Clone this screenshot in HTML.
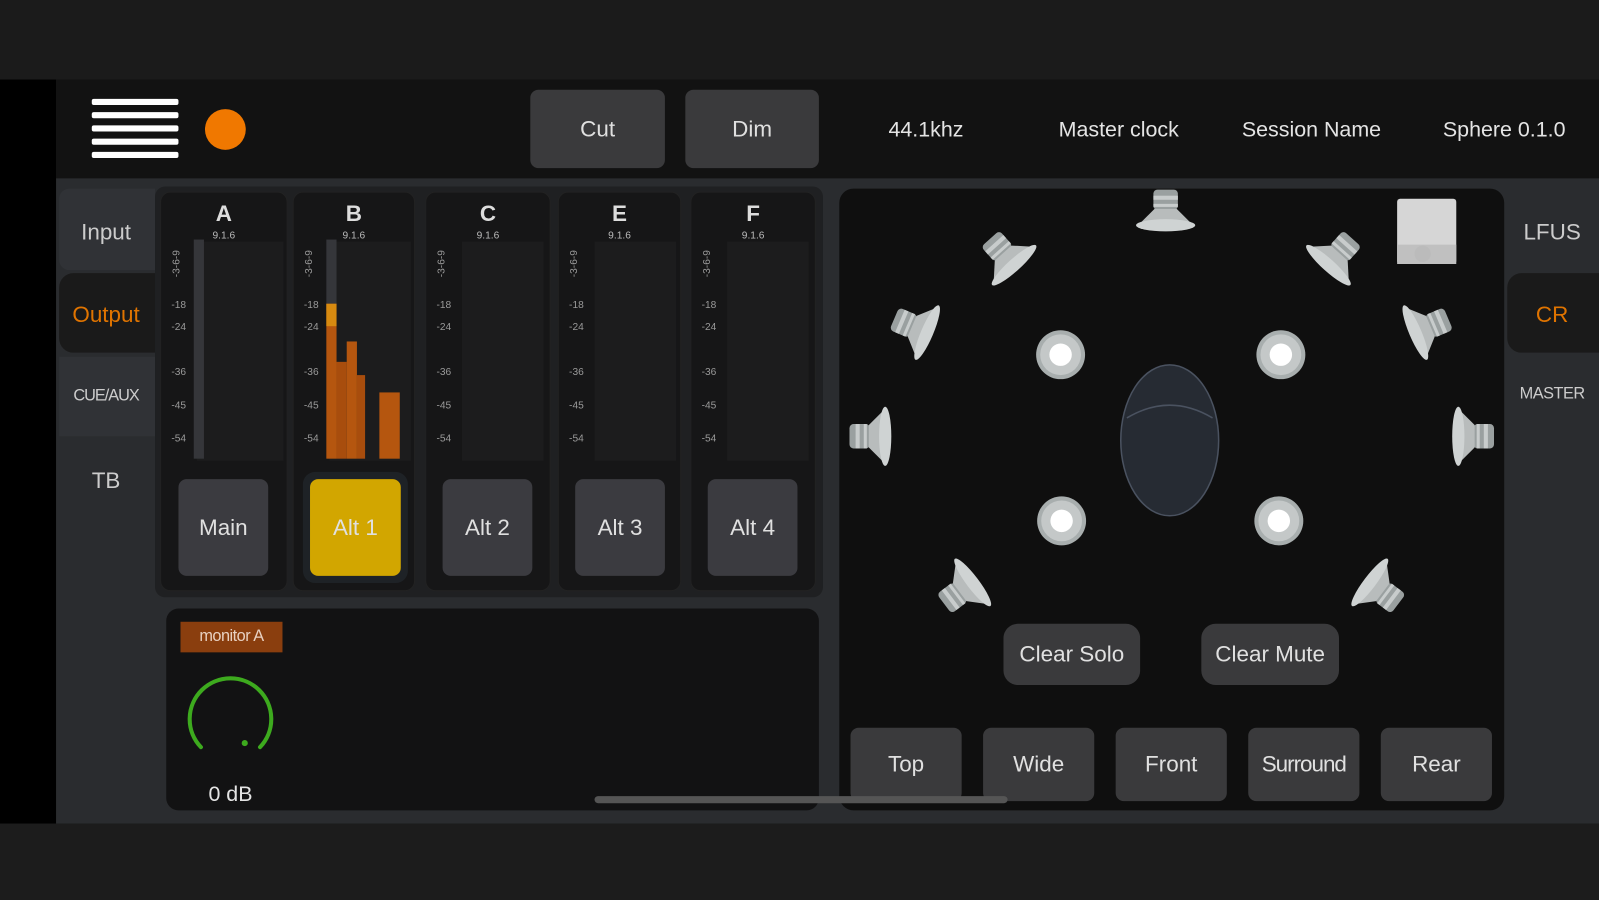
<!DOCTYPE html>
<html><head><meta charset="utf-8"><style>
*{margin:0;padding:0;box-sizing:border-box}
body{width:1599px;height:900px;background:#1b1b1b;position:relative;overflow:hidden;font-family:"Liberation Sans",sans-serif;color:#ddd}
#w{position:absolute;left:0;top:0;width:1568px;height:883px;transform:scale(1.0198,1.0193);transform-origin:0 0}
.a{position:absolute}
.btn{position:absolute;background:#3a3a3c;border-radius:8px;display:flex;align-items:center;justify-content:center;font-size:22px;color:#e0e0e0}
.t{position:absolute;font-size:21px;color:#e4e4e4;transform:translateX(-50%);white-space:nowrap}
.strip{position:absolute;top:188px;height:392px;background:#161617;border-radius:10px;border:1px solid #222}
.sl{position:absolute;width:100%;text-align:center;font-size:22px;font-weight:bold;top:8px;color:#ddd}
.sf{position:absolute;width:100%;text-align:center;font-size:10px;top:37px;color:#bbb}
.mt{position:absolute;top:48px;height:215px;background:#1c1c1d}
</style></head><body><div id="w">
<div class="a" style="left:0;top:0;width:1568px;height:78px;background:#1b1b1b"></div>
<div class="a" style="left:0;top:78px;width:55px;height:730px;background:#000"></div>
<div class="a" style="left:55px;top:78px;width:1513px;height:97px;background:#121212"></div>
<div class="a" style="left:55px;top:175px;width:1513px;height:633px;background:#2a2c2f"></div>
<div class="a" style="left:0;top:808px;width:1568px;height:75px;background:#1c1c1c"></div>
<!-- header -->
<div class="a" style="left:90px;top:97px;width:85px;height:6px;background:#fff;border-radius:2px"></div>
<div class="a" style="left:90px;top:110px;width:85px;height:6px;background:#fff;border-radius:2px"></div>
<div class="a" style="left:90px;top:123px;width:85px;height:6px;background:#fff;border-radius:2px"></div>
<div class="a" style="left:90px;top:136px;width:85px;height:6px;background:#fff;border-radius:2px"></div>
<div class="a" style="left:90px;top:149px;width:85px;height:6px;background:#fff;border-radius:2px"></div>
<div class="a" style="left:201px;top:107px;width:40px;height:40px;background:#f07800;border-radius:50%"></div>
<div class="btn" style="left:520px;top:88px;width:132px;height:77px">Cut</div>
<div class="btn" style="left:672px;top:88px;width:131px;height:77px">Dim</div>
<div class="t" style="left:908px;top:116px">44.1khz</div>
<div class="t" style="left:1097px;top:116px">Master clock</div>
<div class="t" style="left:1286px;top:116px">Session Name</div>
<div class="t" style="left:1475px;top:116px">Sphere 0.1.0</div>
<!-- left nav -->
<div class="a" style="left:58px;top:185px;width:94px;height:80px;background:#303236;border-radius:10px 0 0 10px"></div>
<div class="a" style="left:58px;top:268px;width:94px;height:78px;background:#1a1a1a;border-radius:14px 0 0 14px"></div>
<div class="a" style="left:58px;top:350px;width:94px;height:78px;background:#303236"></div>
<div class="t" style="left:104px;top:215px;font-size:22px;color:#ccc">Input</div>
<div class="t" style="left:104px;top:296px;font-size:22px;color:#e07400">Output</div>
<div class="t" style="left:104px;top:380px;font-size:16px;color:#ccc;letter-spacing:-1px">CUE/AUX</div>
<div class="t" style="left:104px;top:459px;font-size:22px;color:#ccc">TB</div>
<!-- right nav -->
<div class="a" style="left:1478px;top:268px;width:90px;height:78px;background:#1a1a1a;border-radius:14px 0 0 14px"></div>
<div class="t" style="left:1522px;top:215px;font-size:22px;color:#ccc">LFUS</div>
<div class="t" style="left:1522px;top:296px;font-size:22px;color:#e07400">CR</div>
<div class="t" style="left:1522px;top:378px;font-size:16px;color:#ccc;letter-spacing:-.5px">MASTER</div>
<!-- strips -->
<div class="a" style="left:152px;top:183px;width:655px;height:403px;background:#1f2022;border-radius:10px"></div>
<div class="strip" style="left:157px;width:125px"><div class="sl">A</div><div class="sf">9.1.6</div><div class="mt" style="left:35px;width:85px"></div></div>
<div class="strip" style="left:287px;width:120px"><div class="sl">B</div><div class="sf">9.1.6</div><div class="mt" style="left:35px;width:80px"></div></div>
<div class="strip" style="left:417px;width:123px"><div class="sl">C</div><div class="sf">9.1.6</div><div class="mt" style="left:35px;width:80px"></div></div>
<div class="strip" style="left:547px;width:121px"><div class="sl">E</div><div class="sf">9.1.6</div><div class="mt" style="left:35px;width:80px"></div></div>
<div class="strip" style="left:677px;width:123px"><div class="sl">F</div><div class="sf">9.1.6</div><div class="mt" style="left:35px;width:80px"></div></div>
<div class="a" style="left:190px;top:235px;width:10px;height:215px;background:#35363a"></div>
<div class="a" style="left:320px;top:235px;width:10px;height:70px;background:#35363a"></div>
<div class="a" style="left:320px;top:298px;width:10px;height:152px;background:#b5560f"></div>
<div class="a" style="left:320px;top:298px;width:10px;height:22px;background:#d78a10"></div>
<div class="a" style="left:330px;top:355px;width:10px;height:95px;background:#a84d0d"></div>
<div class="a" style="left:340px;top:335px;width:10px;height:115px;background:#b5560f"></div>
<div class="a" style="left:350px;top:368px;width:8px;height:82px;background:#a84d0d"></div>
<div class="a" style="left:372px;top:385px;width:20px;height:65px;background:#b5560f"></div>
<div class="btn" style="left:175px;top:470px;width:88px;height:95px;background:#3b3b40">Main</div>
<div class="a" style="left:297px;top:463px;width:103px;height:109px;border-radius:12px;background:#1e2226"></div>
<div class="btn" style="left:304px;top:470px;width:89px;height:95px;background:#d2a600">Alt 1</div>
<div class="btn" style="left:434px;top:470px;width:88px;height:95px;background:#3b3b40">Alt 2</div>
<div class="btn" style="left:564px;top:470px;width:88px;height:95px;background:#3b3b40">Alt 3</div>
<div class="btn" style="left:694px;top:470px;width:88px;height:95px;background:#3b3b40">Alt 4</div>
<!-- monitor -->
<div class="a" style="left:163px;top:597px;width:640px;height:198px;background:#121213;border-radius:12px"></div>
<div class="a" style="left:177px;top:610px;width:100px;height:30px;background:#8a3e0e;font-size:16px;color:#e8d0c0;display:flex;align-items:center;justify-content:center;letter-spacing:-.5px">monitor A</div>
<svg class="a" style="left:176px;top:655px" width="100" height="100"><path d="M21 78 A40 40 0 1 1 79 78" fill="none" stroke="#3daa1e" stroke-width="4" stroke-linecap="round"/><circle cx="64" cy="74" r="3" fill="#3daa1e"/></svg>
<div class="t" style="left:226px;top:768px">0 dB</div>
<!-- right panel -->
<div class="a" style="left:823px;top:185px;width:652px;height:610px;background:#0f0f0f;border-radius:14px"></div>
<svg class="a" style="left:0;top:0" width="1568" height="883">
<defs><g id="spk"><rect x="-12" y="-24" width="24" height="20" rx="4" fill="#9aa0a0"/><rect x="-12" y="-18" width="24" height="4" fill="#c8cccc"/><rect x="-12" y="-10" width="24" height="3" fill="#c8cccc"/><path d="M-11 -5 L11 -5 L26 10 L-26 10 Z" fill="#b8bcbc"/><ellipse cx="0" cy="11" rx="29" ry="6" fill="#cfd3d3"/></g>
<g id="cl"><circle r="24" fill="#a8aeae"/><circle r="20" fill="#c4c8c8"/><circle r="11" fill="#fff"/></g></defs>
<use href="#spk" transform="translate(1143,210)"/>
<use href="#spk" transform="translate(987,252) rotate(-42)"/>
<use href="#spk" transform="translate(1310,252) rotate(42)"/>
<use href="#spk" transform="translate(899,322) rotate(-67)"/>
<use href="#spk" transform="translate(1398,322) rotate(67)"/>
<use href="#spk" transform="translate(857,428) rotate(-90)"/>
<use href="#spk" transform="translate(1441,428) rotate(90)"/>
<use href="#spk" transform="translate(945,578) rotate(-127)"/>
<use href="#spk" transform="translate(1352,578) rotate(127)"/>
<use href="#cl" transform="translate(1040,348)"/>
<use href="#cl" transform="translate(1256,348)"/>
<use href="#cl" transform="translate(1041,511)"/>
<use href="#cl" transform="translate(1254,511)"/>
<ellipse cx="1147" cy="432" rx="48" ry="74" fill="#262b33" stroke="#4a5260" stroke-width="1.5"/>
<path d="M1105 410 Q1147 385 1189 410" fill="none" stroke="#4a5260" stroke-width="1.5"/>
<rect x="1370" y="195" width="58" height="64" rx="3" fill="#d6d6d6"/><rect x="1370" y="240" width="58" height="19" fill="#c0c0c0"/><circle cx="1395" cy="249" r="8" fill="#bbb"/>
<g font-family="Liberation Sans" font-size="10" fill="#9a9a9a">
<g id="sc1"><text x="168" y="302">-18</text><text x="168" y="324">-24</text><text x="168" y="368">-36</text><text x="168" y="401">-45</text><text x="168" y="433">-54</text><text x="0" y="0" transform="translate(176,272) rotate(-90)">-3-6-9</text></g>
<use href="#sc1" x="130"/><use href="#sc1" x="260"/><use href="#sc1" x="390"/><use href="#sc1" x="520"/>
</g>
</svg>
<div class="btn" style="left:984px;top:612px;width:134px;height:60px;border-radius:14px">Clear Solo</div>
<div class="btn" style="left:1178px;top:612px;width:135px;height:60px;border-radius:14px">Clear Mute</div>
<div class="btn" style="left:834px;top:714px;width:109px;height:72px">Top</div>
<div class="btn" style="left:964px;top:714px;width:109px;height:72px">Wide</div>
<div class="btn" style="left:1094px;top:714px;width:109px;height:72px">Front</div>
<div class="btn" style="left:1224px;top:714px;width:109px;height:72px;letter-spacing:-1px">Surround</div>
<div class="btn" style="left:1354px;top:714px;width:109px;height:72px">Rear</div>
<div class="a" style="left:583px;top:781px;width:405px;height:7px;background:#555;border-radius:4px"></div>
</div></body></html>
